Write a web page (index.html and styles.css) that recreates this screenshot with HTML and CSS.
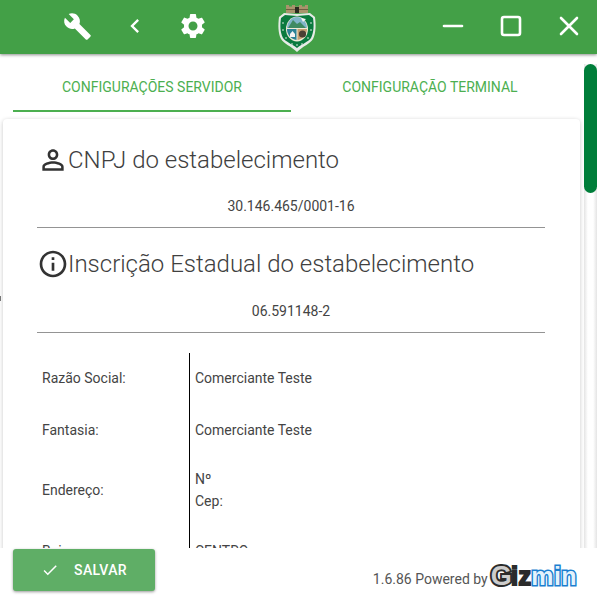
FILE: index.html

```html
<!DOCTYPE html>
<html lang="pt-BR">
<head>
<meta charset="UTF-8" />
<meta name="viewport" content="width=device-width, initial-scale=1" />
<title>Configurações</title>
<link rel="stylesheet" href="styles.css">
</head>
<body>
<header class="topbar">
  <div class="tools">
    <button class="iconBtn" type="button" aria-label="Ferramentas">
      <svg class="wrench" viewBox="0 0 24 24"><path d="M22.7 19l-9.1-9.1c.9-2.3.4-5-1.5-6.9-2-2-5-2.4-7.4-1.3L9 6 6 9 1.6 4.7C.4 7.1.9 10.1 2.9 12.1c1.9 1.9 4.6 2.4 6.9 1.5l9.1 9.1c.4.4 1 .4 1.4 0l2.3-2.3c.5-.4.5-1.1.1-1.4z"/></svg>
    </button>
    <button class="iconBtn" type="button" aria-label="Voltar">
      <svg class="chevron" viewBox="0 0 24 24"><path d="M15.41 7.41L14 6l-6 6 6 6 1.41-1.41L10.83 12z"/></svg>
    </button>
    <button class="iconBtn" type="button" aria-label="Configurações">
      <svg class="gear" viewBox="0 0 24 24"><path d="M19.14 12.94c.04-.3.06-.61.06-.94 0-.32-.02-.64-.07-.94l2.03-1.58c.18-.14.23-.41.12-.61l-1.92-3.32c-.12-.22-.37-.29-.59-.22l-2.39.96c-.5-.38-1.03-.7-1.62-.94l-.36-2.54c-.04-.24-.24-.41-.48-.41h-3.84c-.24 0-.43.17-.47.41l-.36 2.54c-.59.24-1.13.57-1.62.94l-2.39-.96c-.22-.08-.47 0-.59.22L2.74 8.87c-.12.21-.08.47.12.61l2.03 1.58c-.05.3-.09.63-.09.94s.02.64.07.94l-2.03 1.58c-.18.14-.23.41-.12.61l1.92 3.32c.12.22.37.29.59.22l2.39-.96c.5.38 1.03.7 1.62.94l.36 2.54c.05.24.24.41.48.41h3.84c.24 0 .44-.17.47-.41l.36-2.54c.59-.24 1.13-.56 1.62-.94l2.39.96c.22.08.47 0 .59-.22l1.92-3.32c.12-.22.07-.47-.12-.61l-2.01-1.58zM12 15.6c-1.98 0-3.6-1.62-3.6-3.6s1.62-3.6 3.6-3.6 3.6 1.62 3.6 3.6-1.62 3.6-3.6 3.6z"/></svg>
    </button>
  </div>

  <svg class="crest" viewBox="0 0 40 50" role="img" aria-label="Brasão do Ceará">
    <path d="M9 10V2h3v1.500h3V2h3v1.500h4V2h3v1.500h3V2h3v8z" fill="#a8946c"/>
    <rect x="9" y="6" width="22" height="1" fill="#6f5f42"/>
    <rect x="18" y="4" width="4" height="6" fill="#2b2a20"/>
    <path d="M2 14l5-4 13 1 13-1 5 4c1 8 1 16-2 22-3 5-10 7-16 13-6-6-13-8-16-13C1 30 1 22 2 14z" fill="#e6ebe6"/>
    <path d="M4 15l4-3 12 1 12-1 4 3c1 7 1 14-2 20-3 4-9 6-14 10-5-4-11-6-14-10C3 29 3 22 4 15z" fill="#0a7a3e"/>
    <ellipse cx="20" cy="26" rx="11" ry="12.500" fill="#f0ead8"/>
    <path d="M10 25a10 11 0 0 1 20 0z" fill="#7fb4c9"/>
    <path d="M11 25l5-8 4 4 3-2 6 6z" fill="#3f8a63"/>
    <path d="M24 15l5 1-3 3z" fill="#f4f4f4"/>
    <path d="M10 26h9.500v11C14 36 10 32 10 26z" fill="#2b8296"/>
    <path d="M20.500 26H30c0 6-4 10-9.500 11z" fill="#c49f72"/>
    <circle cx="25.500" cy="31" r="3.600" fill="#4a3f33"/>
    <path d="M13 31l2.500-3 2.500 3v3h-5z" fill="#f4f4f4"/>
    <g fill="#f2f2f2">
      <circle cx="6" cy="20" r=".8"/><circle cx="6" cy="27" r=".8"/><circle cx="9" cy="35" r=".8"/>
      <circle cx="15" cy="41" r=".8"/><circle cx="25" cy="41" r=".8"/><circle cx="31" cy="35" r=".8"/>
      <circle cx="34" cy="27" r=".8"/><circle cx="34" cy="20" r=".8"/><circle cx="20" cy="42" r=".8"/>
    </g>
  </svg>

  <div class="winBtns">
    <button class="iconBtn" type="button" aria-label="Minimizar">
      <svg class="winIcon" viewBox="0 0 24 24"><path d="M3 12h18" stroke-width="2.6" stroke-linecap="round"/></svg>
    </button>
    <button class="iconBtn" type="button" aria-label="Maximizar">
      <svg class="winIcon" viewBox="0 0 24 24"><rect x="3" y="3" width="18" height="18" rx="2" stroke-width="2.6"/></svg>
    </button>
    <button class="iconBtn" type="button" aria-label="Fechar">
      <svg class="winIcon" viewBox="0 0 24 24"><path d="M4 4l16 16M20 4L4 20" stroke-width="2.6" stroke-linecap="round"/></svg>
    </button>
  </div>
</header>

<main class="content">
  <nav class="tabs">
    <a class="tab active">CONFIGURAÇÕES SERVIDOR</a>
    <a class="tab">CONFIGURAÇÃO TERMINAL</a>
  </nav>

  <section class="card">
    <h2 class="fieldTitle">
      <svg viewBox="0 0 24 24"><path d="M12 5.9c1.16 0 2.1.94 2.1 2.1s-.94 2.1-2.1 2.1S9.9 9.16 9.9 8s.94-2.1 2.1-2.1m0 9c2.97 0 6.1 1.46 6.1 2.1v1.1H5.9V17c0-.64 3.13-2.1 6.1-2.1M12 4C9.79 4 8 5.79 8 8s1.79 4 4 4 4-1.79 4-4-1.79-4-4-4zm0 9c-2.67 0-8 1.34-8 4v3h16v-3c0-2.66-5.33-4-8-4z"/></svg>
      CNPJ do estabelecimento
    </h2>
    <div class="fieldValue">30.146.465/0001-16</div>

    <h2 class="fieldTitle">
      <svg viewBox="0 0 24 24"><path d="M11 7h2v2h-2zm0 4h2v6h-2zm1-9C6.48 2 2 6.48 2 12s4.48 10 10 10 10-4.48 10-10S17.52 2 12 2zm0 18c-4.41 0-8-3.59-8-8s3.59-8 8-8 8 3.59 8 8-3.59 8-8 8z"/></svg>
      Inscrição Estadual do estabelecimento
    </h2>
    <div class="fieldValue lower">06.591148-2</div>

    <div class="infoTable">
      <div class="infoLabel">Razão Social:</div>
      <div class="infoData">Comerciante Teste</div>
      <div class="infoLabel">Fantasia:</div>
      <div class="infoData">Comerciante Teste</div>
      <div class="infoLabel">Endereço:</div>
      <div class="infoData"><div>Nº</div><div>Cep:</div></div>
      <div class="infoLabel">Bairro:</div>
      <div class="infoData">CENTRO</div>
    </div>
  </section>

  <div class="edgeTick"></div>
  <div class="scrollTrack"><div class="scrollThumb"></div></div>
</main>

<footer class="bottom">
  <button class="saveBtn" type="button">
    <svg viewBox="0 0 24 24"><path d="M9 16.17L4.83 12l-1.42 1.41L9 19 21 7l-1.41-1.41z"/></svg>
    SALVAR
  </button>
  <div class="powered">
    <span>1.6.86 Powered by</span>
    <span class="gizmin"><span class="gizG">G</span><span class="giz">iz</span><span class="min">min</span></span>
  </div>
</footer>
</body>
</html>
```

FILE: styles.css

```css
* {
  box-sizing: border-box;
}

body {
  margin: 0;
  height: 100vh;
  overflow: hidden;
  display: flex;
  flex-direction: column;
  background: #fff;
  font-family: Roboto, 'Liberation Sans', sans-serif;
  color: #444;
}

.topbar {
  height: 54px;
  flex: none;
  display: flex;
  align-items: center;
  padding-bottom: 2px;
  background: #43a047;
  box-shadow: 0 1px 3px rgba(0, 0, 0, 0.45);
  position: relative;
  z-index: 5;
}

.tools {
  display: flex;
  padding-left: 48px;
}

.winBtns {
  display: flex;
  margin-left: auto;
  margin-right: -1px;
}

.iconBtn {
  width: 58px;
  height: 52px;
  padding: 0;
  border: none;
  background: none;
  display: flex;
  align-items: center;
  justify-content: center;
  fill: #fff;
}

.wrench {
  width: 29px;
  height: 29px;
}

.chevron {
  width: 28px;
  height: 28px;
}

.gear {
  width: 30px;
  height: 30px;
}

.winIcon {
  width: 24px;
  height: 24px;
  fill: none;
  stroke: #fff;
}

.crest {
  width: 40px;
  height: 50px;
  margin-left: 55px;
  margin-top: 4px;
}

.content {
  flex: 1;
  min-height: 0;
  overflow: hidden;
  position: relative;
}

.tabs {
  display: flex;
  margin: 0 28px 7px 13px;
}

.tab {
  width: 278px;
  height: 58px;
  padding-top: 7px;
  display: flex;
  align-items: center;
  justify-content: center;
  font-size: 14px;
  font-weight: 400;
  color: #4caf50;
}

.tab.active {
  padding-top: 9px;
  border-bottom: 2px solid #4caf50;
}

.card {
  margin: 0 17px 0 3px;
  padding: 25px 35px 20px 34px;
  background: #fff;
  border-radius: 4px;
  box-shadow: 0 1px 4px rgba(0, 0, 0, 0.22);
}

.fieldTitle {
  margin: 0;
  height: 32px;
  display: flex;
  align-items: center;
  font-size: 24px;
  font-weight: 300;
  color: #404040;
  white-space: nowrap;
}

.fieldTitle svg {
  width: 32px;
  height: 32px;
  flex: none;
  margin-right: -1px;
  fill: #333;
}

.fieldValue {
  margin-bottom: 20px;
  padding: 20px 0 11px;
  font-size: 14px;
  line-height: 20px;
  text-align: center;
  border-bottom: 1px solid #949494;
}

.fieldValue.lower {
  padding-top: 21px;
}

.infoTable {
  display: grid;
  grid-template-columns: 153px 1fr;
  grid-template-rows: 50px 54px 66px 56px;
  font-size: 14px;
  line-height: 22px;
}

.infoLabel,
.infoData {
  display: flex;
  flex-direction: column;
  justify-content: center;
}

.infoLabel {
  padding-left: 5px;
  border-right: 1px solid #000;
}

.infoData {
  padding-left: 5px;
}

.edgeTick {
  position: absolute;
  top: 242px;
  left: 0;
  width: 1px;
  height: 5px;
  background: #777;
}

.scrollTrack {
  position: absolute;
  top: 10px;
  right: 0;
  bottom: 0;
  width: 13px;
  background: linear-gradient(90deg, #e4e4e4, #fff 30%, #fff 70%, #e4e4e4);
}

.scrollThumb {
  height: 129px;
  background: #007e3a;
  border-radius: 7px;
}

.bottom {
  height: 50px;
  flex: none;
  display: flex;
  align-items: flex-start;
  justify-content: space-between;
  padding: 1px 20px 0 13px;
  background: #fff;
  position: relative;
  z-index: 2;
}

.saveBtn {
  width: 142px;
  height: 42px;
  padding: 0 0 0 28px;
  display: flex;
  align-items: center;
  gap: 15px;
  border: none;
  border-radius: 3px;
  background: #5fae66;
  color: #fff;
  font-family: inherit;
  font-size: 14px;
  font-weight: 500;
  letter-spacing: 0.4px;
  box-shadow: 0 1px 3px rgba(0, 0, 0, 0.4);
}

.saveBtn svg {
  width: 18px;
  height: 18px;
  fill: #fff;
}

.powered {
  display: flex;
  align-items: flex-end;
  height: 40px;
  font-size: 14px;
  line-height: 20px;
  color: #555;
}

.gizmin {
  margin-left: 3px;
  font-family: 'Liberation Sans', sans-serif;
  font-size: 25px;
  font-weight: 700;
  line-height: 26px;
  letter-spacing: 0.4px;
  white-space: nowrap;
}

.gizG {
  font-size: 27px;
  letter-spacing: -0.6px;
  color: #ccc;
  -webkit-text-stroke: 4px #2b2b2b;
  paint-order: stroke fill;
}

.giz {
  color: #2b2b2b;
  -webkit-text-stroke: 2px #2b2b2b;
  paint-order: stroke fill;
}

.min {
  color: #e3f2fc;
  -webkit-text-stroke: 3px #1c7fd0;
  paint-order: stroke fill;
}
```
